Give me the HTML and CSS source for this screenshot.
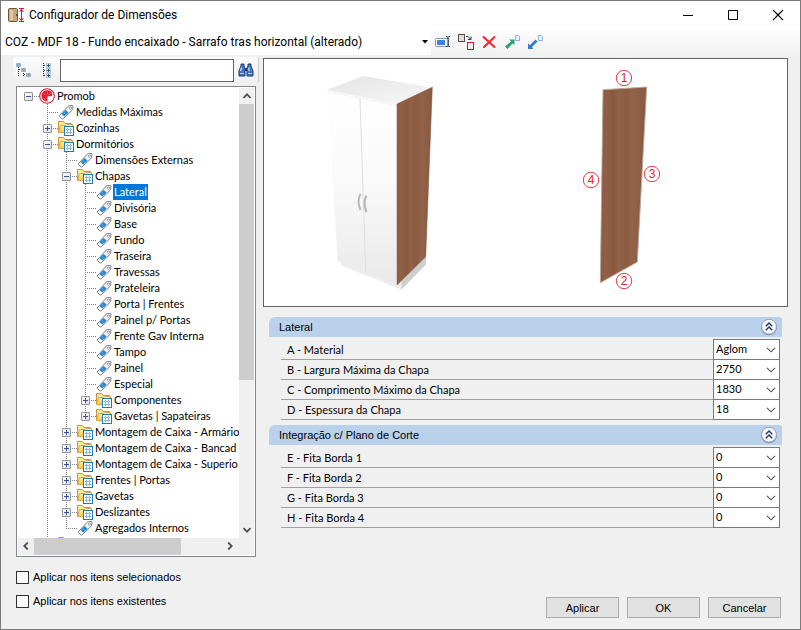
FILE: index.html
```html
<!DOCTYPE html>
<html lang="pt-BR">
<head>
	<meta charset="utf-8">
	<meta name="viewport" content="width=device-width">
	<title>Configurador de Dimensões</title>
	<link rel="stylesheet" href="styles.css">
</head>
<body>

	<svg class="sprite" aria-hidden="true">
		<defs>
			<linearGradient id="folder-fill" x1="0" y1="0" x2="0" y2="1">
				<stop offset="0" stop-color="#fff3b8"/>
				<stop offset="1" stop-color="#f7c744"/>
			</linearGradient>
		</defs>
		<symbol id="tag" viewBox="0 0 16 16">
			<path d="M1.5 11.5L10.2 2.2Q10.6 1.700 11.300 1.600L14 1.400Q15.200 1.400 15 2.600L14.600 5.200Q14.500 5.900 14 6.400L5.200 14.800Q4.500 15.300 3.800 14.700L1.600 12.600Q1 12 1.500 11.500Z" fill="#f4f5f6" stroke="#7d8287"/>
			<path d="M7.700 5.900L10.600 8.700L6.400 12.600L3.600 9.900Z" fill="#1f86c8"/>
			<path d="M5.600 8.100L8.300 10.900" stroke="#7cc4ec" stroke-width=".7"/>
			<circle cx="12.400" cy="4" r="1.200" fill="#fff" stroke="#85898d" stroke-width=".8"/>
		</symbol>
		<symbol id="folder" viewBox="0 0 16 16">
			<path d="M.5 12.500V1.500H5.500L7 3.500H13.500V7" fill="#fce9a0" stroke="#cf9236"/>
			<path d="M.5 12.500L2.500 5.500H8L9 4.500H14.500V12.500Z" fill="url(#folder-fill)" stroke="#dfa544"/>
			<rect x="6.500" y="6.500" width="9" height="9" fill="#fff" stroke="#1c7cb8"/>
			<path d="M8 9.500H14M8 12.500H14M9.500 8V14M12.500 8V14" stroke="#7fb9e3"/>
		</symbol>
		<symbol id="promob" viewBox="0 0 16 16">
			<circle cx="8" cy="8" r="7.300" fill="#fff" stroke="#d8202e" stroke-width="1.100"/>
			<path d="M7 2.300Q11.500 1.700 13 5Q13.800 7.300 12.500 8L8.500 8.500V13.400H7Q2.500 12 2.400 8Q2.600 3.200 7 2.300Z" fill="#d8202e"/>
			<path d="M8.500 3.500L8.300 6.500M12 5L9.500 7.200M4.500 5L6.500 7M5 11.500L6.500 9.500" stroke="#f7b9bd" stroke-width=".5"/>
		</symbol>
		<symbol id="chevron-down" viewBox="0 0 10 6">
			<path d="M1 .8L5 4.800L9 .8" fill="none" stroke="#505050" stroke-width="1.100"/>
		</symbol>
		<symbol id="collapse" viewBox="0 0 18 18">
			<circle cx="9" cy="9.300" r="8" fill="#7f93b5"/>
			<circle cx="9" cy="8.700" r="7.400" fill="#f7f8fb" stroke="#8c98ae" stroke-width=".8"/>
			<path d="M5.800 8.200L9 5L12.200 8.200M5.800 12.200L9 9L12.200 12.200" fill="none" stroke="#263c6c" stroke-width="1.500"/>
		</symbol>
		<symbol id="scroll-arrow" viewBox="0 0 16 16">
			<path d="M4.500 9.800L8 6.300L11.500 9.800" fill="none" stroke="#505050" stroke-width="1.800"/>
		</symbol>
	</svg>

	<main class="window">
		<header class="titlebar">
			<svg class="app-icon" viewBox="0 0 16 16" aria-hidden="true">
				<rect x=".5" y="1.500" width="9" height="13" rx="1" fill="#c6a981" stroke="#75583c"/>
				<path d="M2 3H5V13H2Z" fill="#e0c8a5"/>
				<path d="M8.500 7V9" stroke="#6b4c2d"/>
				<path d="M11 1.500H16M11 14.500H16M13.500 2V14M11.500 5L13.500 2.500L15.500 5M11.500 11L13.500 13.500L15.500 11" fill="none" stroke="#dc1428"/>
			</svg>
			<h1>Configurador de Dimensões</h1>
			<button class="window-button" type="button" aria-label="Minimizar">
				<svg viewBox="0 0 12 12"><path d="M1 6.500H11" stroke="#000"/></svg>
			</button>
			<button class="window-button" type="button" aria-label="Maximizar">
				<svg viewBox="0 0 12 12"><path d="M1.500 1.500H10.500V10.500H1.500Z" fill="none" stroke="#000"/></svg>
			</button>
			<button class="window-button" type="button" aria-label="Fechar">
				<svg viewBox="0 0 12 12"><path d="M1 1L11 11M11 1L1 11" stroke="#000" stroke-width="1.100"/></svg>
			</button>
		</header>

		<div class="toolbar">
			<div class="config-select">
				<select aria-label="Configuração">
					<option>COZ - MDF 18 - Fundo encaixado - Sarrafo tras horizontal (alterado)</option>
				</select>
				<svg viewBox="0 0 11 6" aria-hidden="true"><path d="M2 1H8L5 4.500Z"/></svg>
			</div>
			<button class="tool" type="button" aria-label="Renomear">
				<svg viewBox="0 0 16 16">
					<rect x=".5" y="4.500" width="13" height="8" rx="1" fill="#fff" stroke="#8297b3"/>
					<rect x="2" y="6" width="8" height="5" fill="#3c83df"/>
					<path d="M11 2.500H12.500M13.500 2.500H15M13 3V12M11 12.500H12.500M13.500 12.500H15" stroke="#222"/>
				</svg>
			</button>
			<button class="tool" type="button" aria-label="Copiar">
				<svg viewBox="0 0 16 16">
					<rect x=".5" y=".5" width="6" height="7" fill="#ddd" stroke="#5c4b4b"/>
					<rect x="9.500" y="8.500" width="6" height="7" fill="#eee" stroke="#d81420"/>
					<path d="M8 2.500H10L12.500 5M10 5.500H13V2.500" fill="none" stroke="#17317f"/>
				</svg>
			</button>
			<button class="tool" type="button" aria-label="Excluir">
				<svg viewBox="0 0 16 16"><path d="M2.500 3L13.500 13M13.500 3L3 13" stroke="#ee2630" stroke-width="2" stroke-linecap="round"/></svg>
			</button>
			<button class="tool" type="button" aria-label="Exportar">
				<svg viewBox="0 0 16 16">
					<path d="M11.500 1.500H14L15.500 3V6.500H11.500Z" fill="#e8f1ff" stroke="#8caddd"/>
					<path d="M5 5.500H10.500V11L8.500 9.500L3.500 15L1 12.500L7 7.500Z" fill="#2ca17a"/>
				</svg>
			</button>
			<button class="tool" type="button" aria-label="Importar">
				<svg viewBox="0 0 16 16">
					<path d="M11.500 1.500H14L15.500 3V6.500H11.500Z" fill="#e8f1ff" stroke="#8caddd"/>
					<path d="M1 9.500V15H6.500L5 13L10.500 7.500L8.500 5.500L3 11Z" fill="#387ccd"/>
				</svg>
			</button>
		</div>

		<div class="content">
			<section class="sidebar">
				<div class="search">
					<button class="tool" type="button" aria-label="Recolher tudo">
						<svg viewBox="0 0 16 16">
							<path d="M2.500 5V15M3 7.500H6M7.500 9V15M8 12.500H11" stroke="#333" stroke-dasharray="1 1"/>
							<path d="M.5 1.500H4.500V4.500H.5ZM5.500 6.500H9.500V9.500H5.500ZM10.500 11.500H14.500V14.500H10.500Z" fill="#fff" stroke="#8fb0c8"/>
							<path d="M1 3H4M6 8H9M11 13H14" stroke="#2a5270"/>
						</svg>
					</button>
					<button class="tool" type="button" aria-label="Expandir tudo">
						<svg viewBox="0 0 16 16">
							<path d="M5.500 1V15M6 3.500H9M6 8.500H9M6 13.500H9" stroke="#333" stroke-dasharray="1 1"/>
							<path d="M8.500 1.500H12.500V5.500H8.500ZM8.500 6.500H12.500V10.500H8.500ZM8.500 11.500H12.500V15.500H8.500Z" fill="#fff" stroke="#a9c2d4"/>
							<path d="M9 3.500H12M9 8.500H12M9 13.500H12M10.500 2V5M10.500 7V10M10.500 12V15" stroke="#2a5270"/>
						</svg>
					</button>
					<input type="text" aria-label="Pesquisar">
					<button class="tool" type="button" aria-label="Localizar">
						<svg viewBox="0 0 16 16">
							<path d="M3 2H6V4L7 6V14H1V9L3 4ZM10 2H13V4L15 9V14H9V6L10 4Z" fill="#4677bd" stroke="#173f7c"/>
							<path d="M7 6H9V9H7Z" fill="#173f7c"/>
							<path d="M3.500 5.500L2.500 9M11 5.500V9" stroke="#c4dcf8" stroke-width="1.300"/>
							<path d="M2 11.500H6M10 11.500H14" stroke="#a9c9ef"/>
						</svg>
					</button>
				</div>

				<div class="tree">
					<div class="tree-view">
						<ul class="root">
							<li>
								<div class="node"><button class="toggle" type="button" aria-label="Recolher Promob"></button><svg class="icon"><use href="#promob"/></svg><span>Promob</span></div>
								<ul>
									<li><div class="node leaf"><svg class="icon"><use href="#tag"/></svg><span>Medidas Máximas</span></div></li>
									<li><div class="node"><button class="toggle closed" type="button" aria-label="Expandir Cozinhas"></button><svg class="icon"><use href="#folder"/></svg><span>Cozinhas</span></div></li>
									<li>
										<div class="node"><button class="toggle" type="button" aria-label="Recolher Dormitórios"></button><svg class="icon"><use href="#folder"/></svg><span>Dormitórios</span></div>
										<ul>
											<li><div class="node leaf"><svg class="icon"><use href="#tag"/></svg><span>Dimensões Externas</span></div></li>
											<li>
												<div class="node"><button class="toggle" type="button" aria-label="Recolher Chapas"></button><svg class="icon"><use href="#folder"/></svg><span>Chapas</span></div>
												<ul>
													<li><div class="node leaf selected"><svg class="icon"><use href="#tag"/></svg><span>Lateral</span></div></li>
													<li><div class="node leaf"><svg class="icon"><use href="#tag"/></svg><span>Divisória</span></div></li>
													<li><div class="node leaf"><svg class="icon"><use href="#tag"/></svg><span>Base</span></div></li>
													<li><div class="node leaf"><svg class="icon"><use href="#tag"/></svg><span>Fundo</span></div></li>
													<li><div class="node leaf"><svg class="icon"><use href="#tag"/></svg><span>Traseira</span></div></li>
													<li><div class="node leaf"><svg class="icon"><use href="#tag"/></svg><span>Travessas</span></div></li>
													<li><div class="node leaf"><svg class="icon"><use href="#tag"/></svg><span>Prateleira</span></div></li>
													<li><div class="node leaf"><svg class="icon"><use href="#tag"/></svg><span>Porta | Frentes</span></div></li>
													<li><div class="node leaf"><svg class="icon"><use href="#tag"/></svg><span>Painel p/ Portas</span></div></li>
													<li><div class="node leaf"><svg class="icon"><use href="#tag"/></svg><span>Frente Gav Interna</span></div></li>
													<li><div class="node leaf"><svg class="icon"><use href="#tag"/></svg><span>Tampo</span></div></li>
													<li><div class="node leaf"><svg class="icon"><use href="#tag"/></svg><span>Painel</span></div></li>
													<li><div class="node leaf"><svg class="icon"><use href="#tag"/></svg><span>Especial</span></div></li>
													<li><div class="node"><button class="toggle closed" type="button" aria-label="Expandir Componentes"></button><svg class="icon"><use href="#folder"/></svg><span>Componentes</span></div></li>
													<li><div class="node"><button class="toggle closed" type="button" aria-label="Expandir Gavetas | Sapateiras"></button><svg class="icon"><use href="#folder"/></svg><span>Gavetas | Sapateiras</span></div></li>
												</ul>
											</li>
											<li><div class="node"><button class="toggle closed" type="button" aria-label="Expandir Armário"></button><svg class="icon"><use href="#folder"/></svg><span>Montagem de Caixa - Armário</span></div></li>
											<li><div class="node"><button class="toggle closed" type="button" aria-label="Expandir Bancada"></button><svg class="icon"><use href="#folder"/></svg><span>Montagem de Caixa - Bancad</span></div></li>
											<li><div class="node"><button class="toggle closed" type="button" aria-label="Expandir Superior"></button><svg class="icon"><use href="#folder"/></svg><span>Montagem de Caixa - Superio</span></div></li>
											<li><div class="node"><button class="toggle closed" type="button" aria-label="Expandir Frentes | Portas"></button><svg class="icon"><use href="#folder"/></svg><span>Frentes | Portas</span></div></li>
											<li><div class="node"><button class="toggle closed" type="button" aria-label="Expandir Gavetas"></button><svg class="icon"><use href="#folder"/></svg><span>Gavetas</span></div></li>
											<li><div class="node"><button class="toggle closed" type="button" aria-label="Expandir Deslizantes"></button><svg class="icon"><use href="#folder"/></svg><span>Deslizantes</span></div></li>
											<li><div class="node leaf"><svg class="icon"><use href="#tag"/></svg><span>Agregados Internos</span></div></li>
										</ul>
									</li>
									<li><div class="node"><button class="toggle closed" type="button" aria-label="Expandir"></button><svg class="icon"><use href="#folder"/></svg></div></li>
								</ul>
							</li>
						</ul>
					</div>
					<div class="scrollbar vertical">
						<svg><use href="#scroll-arrow"/></svg>
						<div class="track"><div class="thumb"></div></div>
						<svg class="down"><use href="#scroll-arrow"/></svg>
					</div>
					<div class="scrollbar horizontal">
						<svg class="left"><use href="#scroll-arrow"/></svg>
						<div class="track"><div class="thumb"></div></div>
						<svg class="right"><use href="#scroll-arrow"/></svg>
					</div>
				</div>
			</section>

			<section class="details">
				<svg class="preview" viewBox="0 0 523 247" role="img" aria-label="Armário e chapa lateral">
					<defs>
						<linearGradient id="door" x1="0" y1="0" x2="0" y2="1">
							<stop offset="0" stop-color="#fff"/>
							<stop offset=".45" stop-color="#fafafa"/>
							<stop offset="1" stop-color="#e9e9e9"/>
						</linearGradient>
						<linearGradient id="top" x1="0" y1="0" x2="1" y2="1">
							<stop offset="0" stop-color="#e4e4e4"/>
							<stop offset="1" stop-color="#f7f7f7"/>
						</linearGradient>
						<linearGradient id="wood" x1="0" y1="0" x2="1" y2="0">
							<stop offset="0" stop-color="#8b5b41"/>
							<stop offset=".12" stop-color="#8f6046"/>
							<stop offset=".28" stop-color="#89593f"/>
							<stop offset=".4" stop-color="#926347"/>
							<stop offset=".55" stop-color="#8b5b41"/>
							<stop offset=".7" stop-color="#926348"/>
							<stop offset="1" stop-color="#885941"/>
						</linearGradient>
					</defs>
					<path d="M77 200V206.300L137.300 230.700V222Z" fill="#ededed"/>
					<path d="M137.300 222L162 197V205.500L137.300 230.700Z" fill="#cfcfcf"/>
					<path d="M63.300 30.700L99.700 17L168.300 28.700L133 45Z" fill="url(#top)"/>
					<path d="M63.300 30.700L133 45V226L73.700 202Z" fill="url(#door)"/>
					<path d="M63.300 31.200L133 45.500M63.500 32.800L133 47" stroke="#ededed" stroke-width=".7"/>
					<path d="M96 39.300L101.700 213" stroke="#dedede"/>
					<path d="M133 45L168.300 28.200L161.700 197.700L133 226Z" fill="url(#wood)" stroke="#7b4d36" stroke-width=".5"/>
					<path d="M132.600 46V226" stroke="#d4d0cd" stroke-width=".7"/>
					<path d="M96.500 135Q92.500 142 96.500 151M102.500 136.500Q98.500 144 102.500 153" fill="none" stroke="#b5b5b5" stroke-width="2"/>
					<path d="M339 30.700L382.700 28L373.300 203L336.300 223.700Z" fill="url(#wood)" stroke="#b9aaa0" stroke-width=".9"/>
					<g class="marks">
						<circle cx="360" cy="19" r="7.700"/>
						<circle cx="360" cy="222" r="7.700"/>
						<circle cx="388" cy="115" r="7.700"/>
						<circle cx="327" cy="121" r="7.700"/>
						<text x="360" y="23">1</text>
						<text x="360" y="226">2</text>
						<text x="388" y="119">3</text>
						<text x="327" y="125">4</text>
					</g>
				</svg>

				<section class="group">
					<header><h2>Lateral</h2><button type="button" aria-label="Recolher Lateral"><svg><use href="#collapse"/></svg></button></header>
					<div class="fields">
						<div class="field"><label for="a">A - Material</label><select id="a"><option>Aglom</option></select><svg><use href="#chevron-down"/></svg></div>
						<div class="field"><label for="b">B - Largura Máxima da Chapa</label><select id="b"><option>2750</option></select><svg><use href="#chevron-down"/></svg></div>
						<div class="field"><label for="c">C - Comprimento Máximo da Chapa</label><select id="c"><option>1830</option></select><svg><use href="#chevron-down"/></svg></div>
						<div class="field"><label for="d">D - Espessura da Chapa</label><select id="d"><option>18</option></select><svg><use href="#chevron-down"/></svg></div>
					</div>
				</section>

				<section class="group">
					<header><h2>Integração c/ Plano de Corte</h2><button type="button" aria-label="Recolher Integração"><svg><use href="#collapse"/></svg></button></header>
					<div class="fields">
						<div class="field"><label for="e">E - Fita Borda 1</label><select id="e"><option>0</option></select><svg><use href="#chevron-down"/></svg></div>
						<div class="field"><label for="f">F - Fita Borda 2</label><select id="f"><option>0</option></select><svg><use href="#chevron-down"/></svg></div>
						<div class="field"><label for="g">G - Fita Borda 3</label><select id="g"><option>0</option></select><svg><use href="#chevron-down"/></svg></div>
						<div class="field"><label for="h">H - Fita Borda 4</label><select id="h"><option>0</option></select><svg><use href="#chevron-down"/></svg></div>
					</div>
				</section>
			</section>
		</div>

		<footer class="footer">
			<div class="checks">
				<label><input type="checkbox">Aplicar nos itens selecionados</label>
				<label><input type="checkbox">Aplicar nos itens existentes</label>
			</div>
			<div class="actions">
				<button type="button">Aplicar</button>
				<button type="button">OK</button>
				<button type="button">Cancelar</button>
			</div>
		</footer>
	</main>

</body>
</html>
```
FILE: styles.css
```css
* {
	box-sizing: border-box;
	padding: 0;
	margin: 0;
	font: inherit;
	color: inherit;
}

body {
	background-color: #F0F0F0;
	font-family: "Liberation Sans", Arial, sans-serif;
	font-size: 11px;
	line-height: 16px;
	color: #000;
}

button {
	border: 0;
	background: none;
}

select {
	appearance: none;
	border-radius: 0;
}

ul {
	list-style: none;
}

svg {
	display: block;
}

.sprite {
	width: 0;
	height: 0;
	position: absolute;
}

.window {
	display: flex;
	flex-direction: column;
	min-height: 100vh;
	border: 1px solid #7A7A7A;
}

/* Title bar */
.titlebar {
	display: flex;
	align-items: center;
	height: 28px;
	padding-left: 7px;
	background-color: #FFF;
	font-family: Roboto, sans-serif;
	font-size: 12px;
}

.titlebar h1 {
	flex: 1;
	padding-left: 5px;
}

.app-icon {
	width: 16px;
	height: 16px;
}

.window-button {
	display: flex;
	justify-content: center;
	align-items: center;
	width: 45px;
	height: 28px;
}

.window-button svg {
	width: 12px;
	height: 12px;
}

/* Toolbar */
.toolbar {
	display: flex;
	align-items: center;
	height: 26px;
	background: linear-gradient(#FDFDFD, #F1F1F1);
}

.toolbar .tool {
	width: 23px;
	padding-left: 4px;
}

.tool svg {
	width: 16px;
	height: 16px;
}

.config-select {
	display: grid;
	width: 430px;
	height: 26px;
	background-color: #FFF;
	font-family: Roboto, sans-serif;
	font-size: 12px;
}

.config-select select {
	grid-area: 1 / 1;
	padding-left: 4px;
	border: 0;
	background: none;
}

.config-select svg {
	grid-area: 1 / 1;
	place-self: center end;
	width: 11px;
	height: 6px;
	pointer-events: none;
}

/* Columns */
.content {
	display: grid;
	grid-template-columns: 246px 1fr;
	gap: 4px;
	padding: 2px 12px 0 12px;
}

.sidebar {
	display: flex;
	flex-direction: column;
}

.search {
	display: flex;
	align-items: center;
	height: 26px;
	padding: 0 4px 0 3px;
	border-right: 1px solid #C8C8C8;
	border-radius: 3px;
	background: linear-gradient(#FCFCFC, #EFEFEF);
}

.search .tool {
	width: 22px;
}

.search input {
	flex: 1;
	min-width: 0;
	height: 23px;
	padding: 0 4px;
	margin-right: 4px;
	border: 1px solid #646464;
	background-color: #FFF;
}

.search .tool:last-child {
	width: 16px;
}

/* Tree */
.tree {
	display: grid;
	grid-template-columns: minmax(0, 1fr) 15px;
	grid-template-rows: 450px 17px;
	padding: 1px;
	margin: 3px 3px 0 3px;
	border: 1px solid #828790;
	background-color: #FFF;
	font-family: Lato, sans-serif;
}

.tree-view {
	overflow: hidden;
	padding-left: 6px;
	white-space: nowrap;
}

.tree ul ul {
	margin-left: 19px;
}

/* dotted branch lines */
.tree li li {
	background: repeating-linear-gradient(#808080 0 1px, transparent 1px 2px) 4px 0 / 1px 100% no-repeat;
}

.tree li li:last-child {
	background-size: 1px 8px;
}

.node {
	display: flex;
	align-items: center;
	height: 16px;
	background: repeating-linear-gradient(90deg, #808080 0 1px, transparent 1px 2px) 4px 8px / 12px 1px no-repeat;
}

.leaf {
	padding-left: 15px;
}

.toggle {
	flex: none;
	width: 9px;
	height: 9px;
	margin-right: 6px;
	border: 1px solid #919191;
	border-radius: 1px;
	background:
		linear-gradient(#34549B, #34549B) center / 5px 1px no-repeat,
		linear-gradient(135deg, #FFF, #DDD);
}

.toggle.closed {
	background:
		linear-gradient(#34549B, #34549B) center / 5px 1px no-repeat,
		linear-gradient(#34549B, #34549B) center / 1px 5px no-repeat,
		linear-gradient(135deg, #FFF, #DDD);
}

.icon {
	flex: none;
	width: 16px;
	height: 16px;
}

.node span {
	padding: 0 1px;
	margin-left: 1px;
}

.selected span {
	background-color: #0078D7;
	color: #FFF;
}

/* Scrollbars */
.scrollbar {
	display: flex;
	background-color: #F0F0F0;
}

.scrollbar svg {
	flex: none;
	width: 16px;
	height: 16px;
}

.vertical {
	flex-direction: column;
}

.horizontal {
	grid-column: 1 / 3;
	padding-right: 16px;
}

.track {
	flex: 1;
}

.thumb {
	background-color: #CDCDCD;
}

.vertical .thumb {
	height: 66%;
}

.horizontal .thumb {
	width: 78%;
	height: 100%;
}

.down {
	transform: rotate(180deg);
}

.left {
	transform: rotate(-90deg);
}

.right {
	transform: rotate(90deg);
}

/* Preview */
.preview {
	width: 100%;
	margin-top: 1px;
	border: 1px solid #646464;
	background-color: #FFF;
}

.marks circle {
	fill: none;
	stroke: #EC3A42;
}

.marks text {
	fill: #E8202A;
	font-size: 12px;
	text-anchor: middle;
}

/* Property groups */
.group {
	padding: 0 6px;
}

.preview + .group {
	margin-top: 10px;
}

.group + .group {
	margin-top: 5px;
}

.group header {
	display: flex;
	justify-content: space-between;
	align-items: center;
	height: 20px;
	padding: 0 4px 0 10px;
	border-radius: 6px 3px 0 0;
	background-color: #B9D1EA;
}

.group header svg {
	width: 18px;
	height: 18px;
}

.fields {
	padding: 3px 2px 0 12px;
	font-family: Lato, sans-serif;
}

.field {
	display: grid;
	grid-template-columns: 1fr 67px;
	grid-template-rows: 19px;
	align-items: center;
	border-bottom: 1px solid #A0A0A0;
}

.field label {
	padding-left: 6px;
}

.field select {
	grid-area: 1 / 2;
	height: 21px;
	padding: 0 0 1px 2px;
	margin: -1px 0;
	border: 1px solid #7A7A7A;
	background-color: #FFF;
}

.field svg {
	grid-area: 1 / 2;
	justify-self: end;
	width: 10px;
	height: 6px;
	margin-right: 4px;
	pointer-events: none;
}

/* Footer */
.footer {
	display: flex;
	justify-content: space-between;
	align-items: flex-end;
	padding: 12px 19px 11px 15px;
}

.checks {
	display: grid;
	gap: 8px;
	padding-bottom: 9px;
}

.checks label {
	display: flex;
	align-items: center;
	gap: 4px;
}

.checks input {
	appearance: none;
	width: 13px;
	height: 13px;
	border: 1px solid #333;
	background-color: #FFF;
}

.checks input:checked {
	background-color: #0078D7;
}

.actions {
	display: flex;
	gap: 8px;
}

.actions button {
	width: 73px;
	height: 21px;
	border: 1px solid #ADADAD;
	background-color: #E1E1E1;
}
```
